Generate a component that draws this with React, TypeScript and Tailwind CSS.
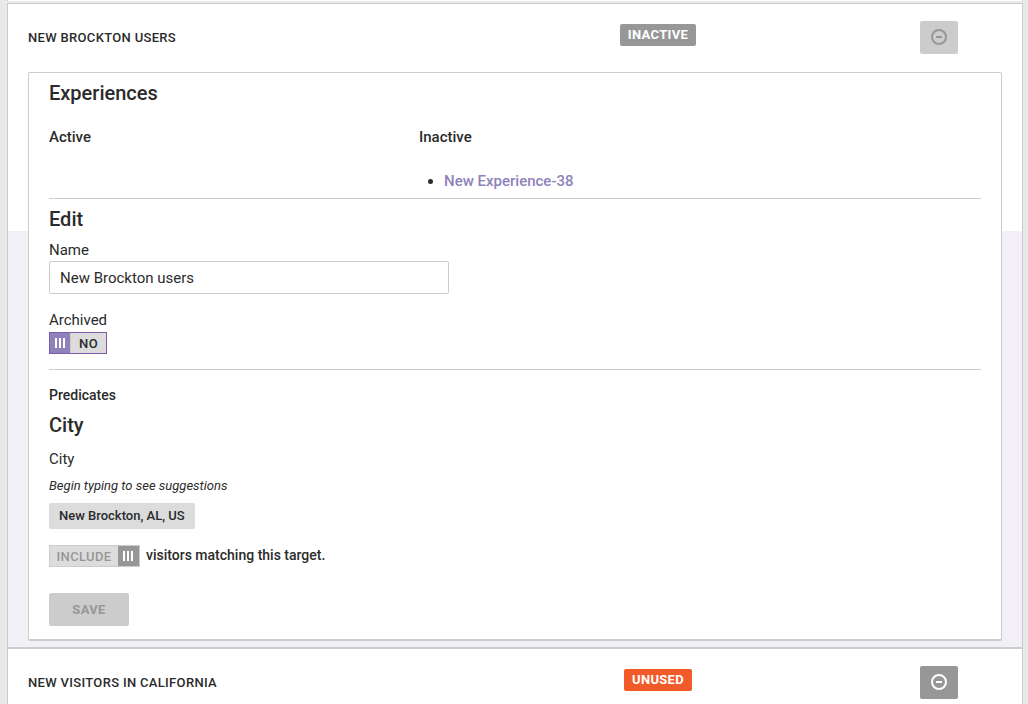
import { useState } from "react"

const MinusCircle = () => (
  <svg width="16" height="16" viewBox="0 0 16 16" fill="none" stroke="currentColor" aria-hidden="true">
    <circle cx="8" cy="8" r="7" strokeWidth="2" />
    <path d="M5 8h6" strokeWidth="2" />
  </svg>
)

const Grip = () => (
  <svg width="12" height="10" viewBox="0 0 12 10" fill="#fff" aria-hidden="true">
    <rect x="1" width="2" height="10" />
    <rect x="5" width="2" height="10" />
    <rect x="9" width="2" height="10" />
  </svg>
)

type HeaderProps = {
  title: string
  status: string
  statusClass: string
  buttonClass: string
  disabled?: boolean
}

const RowHeader = ({ title, status, statusClass, buttonClass, disabled }: HeaderProps) => (
  <div className="grid h-[68px] grid-cols-[412fr_436fr_126px] items-start">
    <h2 className="pt-6 text-[13px] leading-5 font-medium tracking-wide uppercase">{title}</h2>
    <div className="flex justify-center pt-5">
      <span className={`rounded-[2px] px-2 text-[13px] leading-[22px] font-bold tracking-wide text-white ${statusClass}`}>{status}</span>
    </div>
    <div className="flex justify-center pt-[17px]">
      <button aria-label={`Archive ${title}`} disabled={disabled}
        className={`flex h-[33px] w-[38px] items-center justify-center rounded-[2px] pb-px ${buttonClass}`}
      >
        <MinusCircle />
      </button>
    </div>
  </div>
)

const App = () => {
  const [name, setName] = useState<string>("New Brockton users")
  const [archived, setArchived] = useState<boolean>(false)

  return (
    <main className="min-h-screen bg-[#e9e9e9] pr-[5px] pl-[7px] font-['Roboto',sans-serif] text-[15px] leading-5 text-[#2b2b2b]">
      <div className="h-px border-x border-[#cccccc] bg-white" />
      <ul className="mt-[2px] border-x border-t border-[#cccccc]">
        <li className="border-b-2 border-[#cccccc] bg-[linear-gradient(#fff_227px,#f2f0f6_227px)] px-5 pb-[6px]">
          <RowHeader title="New Brockton users" status="INACTIVE" statusClass="bg-[#979797]" buttonClass="bg-[#cccccc] text-[#979797]" disabled />
          <div className="rounded-[2px] border border-b-2 border-[#cccccc] bg-white px-5 pb-[13px]">
            <h3 className="text-xl leading-10 font-medium">Experiences</h3>
            <div className="mt-[14px] grid grid-cols-[370fr_562fr] font-medium">
              <h4>Active</h4>
              <div>
                <h4>Inactive</h4>
                <ul className="mt-6 list-disc pl-[25px]">
                  <li><a href="#experience-38" className="text-[#8f82bc]">New Experience-38</a></li>
                </ul>
              </div>
            </div>
            <hr className="mt-[7px] border-[#cccccc]" />

            <form onSubmit={(e) => e.preventDefault()}>
              <h3 className="text-xl leading-10 font-medium">Edit</h3>
              <label htmlFor="name" className="block leading-[22px]">Name</label>
              <input id="name" type="text" value={name} onChange={(e) => setName(e.target.value)}
                className="block h-[33px] w-full max-w-[400px] rounded-[2px] border border-[#cccccc] bg-white px-[10px] outline-none"
              />

              <label htmlFor="archived" className="mt-[15px] block leading-[22px]">Archived</label>
              <label className="relative mt-px flex h-[22px] w-fit items-stretch border border-[#7a5fa8] bg-[#dcdcdc]">
                <input id="archived" type="checkbox" checked={archived} onChange={(e) => setArchived(e.target.checked)} className="sr-only" />
                <span className="flex w-[21px] items-center justify-center border-r border-[#cccccc] bg-[#8f82bc]"><Grip /></span>
                <span className="w-[35px] text-center text-[13px] leading-[22px] font-medium tracking-wide">{archived ? "YES" : "NO"}</span>
              </label>
              <hr className="mt-[15px] border-[#cccccc]" />

              <h4 className="mt-[15px] text-sm leading-5 font-medium">Predicates</h4>
              <h3 className="text-xl leading-10 font-medium">City</h3>
              <p className="mt-[3px] leading-[22px]">City</p>
              <p className="mt-[6px] text-[13px] leading-5 italic">Begin typing to see suggestions</p>
              <span className="mt-[7px] block w-fit rounded-[2px] bg-[#dcdcdc] px-[10px] text-[13px] leading-[26px] font-medium">New Brockton, AL, US</span>

              <div className="mt-4 flex h-[22px] font-medium">
                <label className="relative flex items-stretch border border-[#cccccc] bg-[#dcdcdc]">
                  <input type="checkbox" checked disabled readOnly aria-label="Include" className="sr-only" />
                  <span className="w-[68px] text-center text-[13px] leading-[22px] tracking-wide text-[#979797]">INCLUDE</span>
                  <span className="flex w-[21px] items-center justify-center border-r border-[#979797] bg-[#979797]"><Grip /></span>
                </label>
                <span className="ml-[6px] text-sm leading-5">visitors matching this target.</span>
              </div>

              <button type="submit" disabled className="mt-[26px] block h-[33px] w-20 rounded-[2px] bg-[#cccccc] text-[13px] font-bold tracking-wide text-[#979797]">
                SAVE
              </button>
            </form>
          </div>
        </li>
        <li className="bg-white px-5">
          <RowHeader title="New visitors in California" status="UNUSED" statusClass="bg-[#f15a29]" buttonClass="bg-[#979797] text-white" />
        </li>
      </ul>
    </main>
  )
}

export default App
